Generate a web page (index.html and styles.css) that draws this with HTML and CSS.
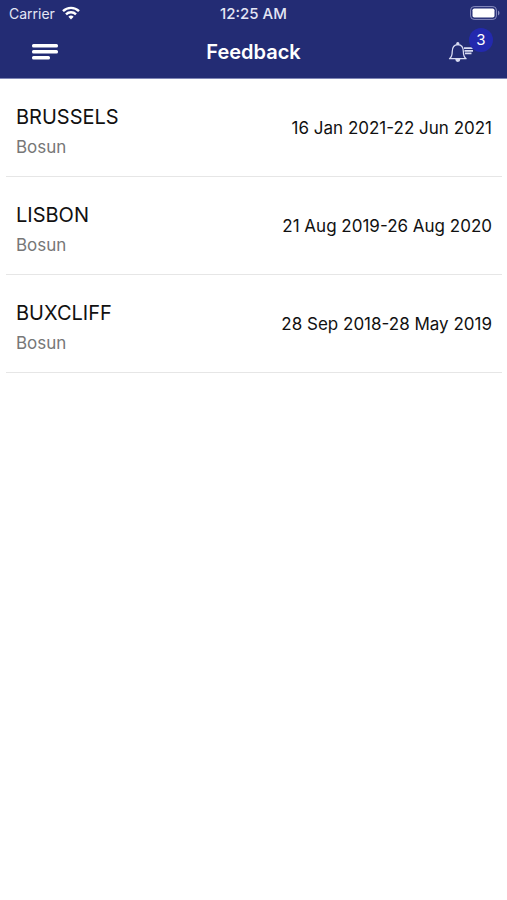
FILE: index.html
```html
<!DOCTYPE html>
<html lang="en">
<head>
    <meta charset="UTF-8">
    <meta name="viewport" content="width=device-width, initial-scale=1.0">
    <title>Feedback</title>
    <link rel="stylesheet" href="styles.css">
</head>
<body>
    <header class="header">
        <div class="status-bar">
            <div class="carrier">
                <span>Carrier</span>
                <svg width="18" height="14" viewBox="0 0 18 14" fill="none" stroke="#fff" stroke-width="2.4">
                    <path d="M1 5.2C5.5 .7 12.5 .7 17 5.2"/>
                    <path d="M4 8.4C6.800 5.600 11.200 5.600 14 8.400"/>
                    <path d="M6.400 10.700C7.900 9.200 10.100 9.200 11.600 10.700L9 13.400z" fill="#fff" stroke="none"/>
                </svg>
            </div>
            <span class="time">12:25 AM</span>
            <div class="battery">
                <svg width="30" height="14" viewBox="0 0 30 14">
                    <rect x=".6" y=".6" width="25.800" height="12.800" rx="3.500" fill="none" stroke="#8a8fc0"/>
                    <rect x="2.500" y="2.500" width="22" height="9" rx="1.800" fill="#fff"/>
                    <path d="M28 4.500c2 1 2 4 0 5z" fill="#8a8fc0"/>
                </svg>
            </div>
        </div>
        <div class="nav-bar">
            <button class="menu-btn" type="button" aria-label="Menu">
                <svg width="26" height="16" viewBox="0 0 26 16" fill="#fff">
                    <rect y="0" width="26" height="3.400" rx="1.500"/>
                    <rect y="6" width="26" height="3.400" rx="1.500"/>
                    <rect y="12" width="18" height="3.400" rx="1.500"/>
                </svg>
            </button>
            <h1>Feedback</h1>
            <button class="bell-btn" type="button" aria-label="Notifications">
                <svg width="27" height="20" viewBox="0 0 27 20" fill="none" stroke="#d9dcf2" stroke-width="1.300">
                    <path d="M1.500 16.700C3.800 15 4.200 13 4.200 10C4.200 5.500 6.300 2.700 9.800 2.700S15.400 5.500 15.400 10C15.400 13 15.800 15 18.100 16.700Z" stroke-linejoin="round"/>
                    <circle cx="9.800" cy="1.700" r="1" fill="#d9dcf2"/>
                    <path d="M8 17.500a1.800 1.800 0 0 0 3.600 0z" fill="#d9dcf2"/>
                    <path d="M16 6.200h9.500M16.500 8.800h8.500M17 11.400h6.500" stroke-width="1.800"/>
                </svg>
                <span class="badge">3</span>
            </button>
        </div>
    </header>
    <main>
        <ul class="list">
            <li class="item">
                <div class="ship">
                    <h2>BRUSSELS</h2>
                    <p>Bosun</p>
                </div>
                <span class="dates">16 Jan 2021-22 Jun 2021</span>
            </li>
            <li class="item">
                <div class="ship">
                    <h2>LISBON</h2>
                    <p>Bosun</p>
                </div>
                <span class="dates">21 Aug 2019-26 Aug 2020</span>
            </li>
            <li class="item">
                <div class="ship">
                    <h2>BUXCLIFF</h2>
                    <p>Bosun</p>
                </div>
                <span class="dates">28 Sep 2018-28 May 2019</span>
            </li>
        </ul>
    </main>
</body>
</html>
```
FILE: styles.css
```css
* {
    margin: 0;
    padding: 0;
    box-sizing: border-box;
}
body {
    background-color: #fff;
    color: #111;
    font-family: Inter, sans-serif;
}
svg {
    display: block;
}
.header {
    background-color: #232c74;
    color: #fff;
    border-bottom: 1px solid #7f86b5;
}
.status-bar, .nav-bar {
    display: grid;
    grid-template-columns: 1fr auto 1fr;
    align-items: center;
}
.status-bar {
    height: 26px;
    padding: 0 7px;
    font-size: 14px;
}
.carrier {
    display: flex;
    align-items: center;
    gap: 7px;
    padding-left: 2px;
    color: #e4e6f4;
}
.time {
    font-size: 15px;
    font-weight: 500;
    color: #e4e6f4;
}
.battery {
    justify-self: end;
}
.nav-bar {
    height: 52px;
    padding: 0 32px;
}
.nav-bar h1 {
    font-size: 20px;
    font-weight: 600;
}
.nav-bar button {
    position: relative;
    background: none;
    border: none;
    color: #fff;
    font-family: inherit;
    cursor: pointer;
}
.menu-btn {
    justify-self: start;
}
.bell-btn {
    justify-self: end;
}
.badge {
    position: absolute;
    top: -14px;
    right: -18px;
    width: 24px;
    height: 24px;
    border-radius: 50%;
    background-color: #2329ae;
    font-size: 15px;
    line-height: 24px;
    text-align: center;
}
.list {
    list-style: none;
    padding: 0 5px 0 6px;
}
.item {
    display: flex;
    justify-content: space-between;
    align-items: center;
    height: 98px;
    padding: 0 10px;
    border-bottom: 1px solid #e6e6e6;
}
.ship {
    padding-top: 8px;
}
.ship h2 {
    font-size: 20px;
    font-weight: 400;
    line-height: 30px;
}
.ship p {
    color: #777;
    font-size: 17px;
    line-height: 30px;
}
.dates {
    font-size: 17px;
}
```
